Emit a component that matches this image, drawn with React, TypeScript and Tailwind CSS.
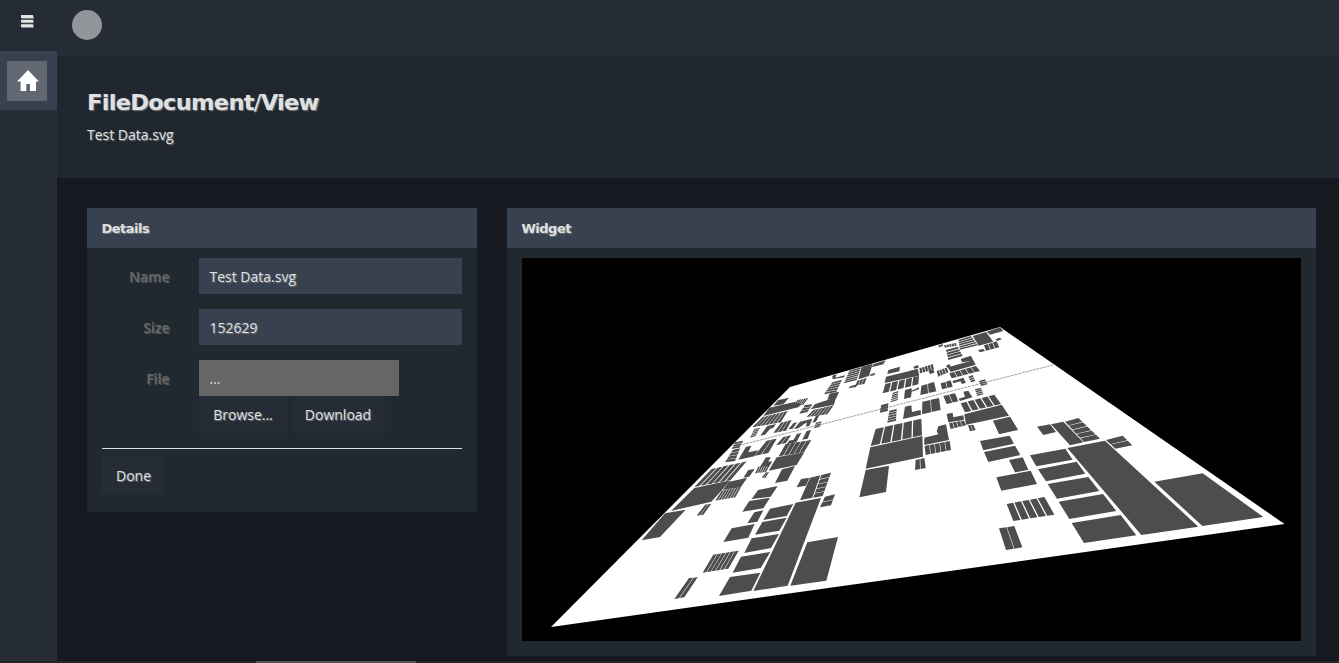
import React from "react";

type Block = { p: number[]; cols?: number; rows?: number };
type Region = { x: number; y: number; blocks: Block[] };

const b = (...p: number[]): Block => ({ p });
const cols = (n: number, ...p: number[]): Block => ({ p, cols: n });
const rows = (n: number, ...p: number[]): Block => ({ p, rows: n });

// Four-sided blocks list their corners from the top left, clockwise. Units are thirds of a pixel.
const regions: Region[] = [
  {
    x: 640, y: 430,
    blocks: [
      cols(6, 215, 117, 320, 94, 272, 150, 163, 171),
      b(163, 174, 272, 151, 214, 215, 93, 243),
      b(268, 155, 322, 143, 302, 172, 248, 180),
      b(325, 120, 344, 117, 328, 140, 310, 143),
      cols(7, 245, 182, 303, 171, 286, 202, 226, 212),
      cols(2, 196, 224, 214, 221, 190, 254, 170, 257),
      b(75, 250, 137, 239, 60, 321, 5, 331),
      cols(5, 437, 42, 514, 30, 492, 67, 416, 79),
      b(410, 82, 493, 67, 470, 105, 386, 122),
      b(378, 82, 392, 82, 385, 95, 397, 94, 388, 109, 360, 111),
      cols(5, 355, 110, 388, 108, 378, 126, 345, 130),
      cols(2, 378, 127, 387, 126, 377, 143, 365, 143),
      b(426, 118, 465, 108, 442, 152, 405, 159),
      b(354, 180, 413, 168, 392, 200, 335, 207),
      b(328, 213, 390, 203, 370, 235, 307, 245),
      b(343, 247, 370, 241, 352, 275, 322, 280),
      b(275, 295, 344, 282, 325, 323, 250, 336),
      b(390, 236, 460, 222, 440, 258, 370, 270),
      b(367, 276, 440, 263, 418, 302, 345, 314),
      b(335, 325, 417, 312, 393, 354, 313, 369),
      b(303, 380, 391, 366, 362, 414, 278, 428),
      b(270, 441, 361, 428, 334, 482, 237, 498),
      b(467, 218, 543, 204, 443, 467, 340, 483),
      b(502, 337, 594, 321, 559, 452, 451, 467),
      cols(6, 220, 374, 296, 362, 265, 416, 188, 428),
      cols(2, 147, 444, 173, 442, 133, 502, 103, 507),
      b(483, 147, 508, 143, 498, 167, 470, 172),
      b(510, 143, 541, 136, 517, 203, 480, 211),
      rows(5, 544, 135, 573, 128, 548, 198, 520, 203),
      rows(2, 555, 200, 585, 193, 573, 226, 540, 232),
    ],
  },
  {
    x: 980, y: 410,
    blocks: [
      b(39, 32, 90, 22, 113, 58, 58, 72),
      b(0, 93, 89, 77, 102, 101, 10, 121),
      b(12, 126, 105, 107, 121, 135, 25, 156),
      b(87, 150, 128, 142, 145, 179, 105, 187),
      b(49, 202, 152, 182, 171, 222, 64, 242),
      cols(5, 80, 282, 193, 261, 223, 314, 100, 333),
      cols(2, 57, 355, 103, 348, 127, 412, 78, 420),
      b(150, 136, 256, 116, 278, 149, 169, 169),
      b(174, 178, 290, 155, 316, 191, 198, 214),
      b(203, 222, 325, 201, 358, 243, 231, 266),
      b(236, 275, 369, 252, 409, 303, 268, 327),
      b(275, 339, 422, 315, 469, 376, 312, 399),
      b(262, 114, 375, 92, 655, 350, 484, 375),
      b(523, 215, 668, 190, 850, 321, 667, 348),
      b(171, 50, 210, 43, 228, 66, 190, 75),
      b(213, 43, 250, 35, 310, 97, 270, 106),
      rows(5, 255, 35, 295, 24, 360, 86, 312, 96),
      rows(2, 378, 90, 428, 77, 457, 106, 406, 116),
    ],
  },
  {
    x: 850, y: 390,
    blocks: [
      cols(5, 77, 117, 214, 86, 216, 136, 62, 168),
      b(61, 172, 217, 138, 219, 200, 47, 236),
      b(47, 240, 117, 227, 108, 306, 28, 322),
      b(223, 143, 265, 133, 260, 124, 265, 109, 288, 103, 297, 150, 223, 165),
      cols(5, 224, 168, 299, 153, 303, 180, 227, 195),
      cols(2, 197, 210, 223, 204, 227, 234, 195, 240),
      b(165, 50, 184, 46, 186, 66, 212, 60, 213, 74, 159, 87),
      cols(2, 217, 35, 267, 24, 272, 60, 216, 73),
      rows(5, 118, 62, 140, 57, 138, 92, 112, 98),
      rows(3, 94, 45, 115, 40, 112, 63, 91, 67),
      cols(2, 280, 18, 315, 10, 325, 34, 290, 42),
      b(326, 26, 345, 20, 340, 5, 355, 2, 367, 22, 330, 33),
      cols(5, 332, 40, 433, 14, 453, 42, 345, 67),
      b(343, 73, 455, 44, 477, 77, 348, 104),
      b(430, 92, 480, 80, 504, 120, 447, 132),
      b(290, 72, 308, 68, 310, 82, 340, 76, 342, 90, 295, 97),
      cols(4, 297, 99, 342, 92, 348, 106, 302, 117),
      cols(2, 354, 106, 370, 104, 377, 120, 360, 124),
    ],
  },
  {
    x: 910, y: 320,
    blocks: [
      b(230, 35, 270, 22, 280, 33, 240, 44),
      b(188, 48, 228, 36, 250, 65, 206, 77),
      rows(5, 145, 60, 183, 48, 204, 76, 150, 89),
      cols(3, 222, 76, 260, 64, 268, 82, 228, 92),
      b(204, 90, 220, 87, 225, 93, 210, 97),
      b(256, 58, 270, 53, 275, 58, 262, 63),
      cols(5, 102, 76, 138, 69, 140, 77, 105, 83),
      b(85, 77, 97, 72, 99, 78, 87, 82),
      rows(4, 108, 90, 143, 80, 158, 108, 115, 120),
      b(152, 117, 183, 107, 190, 122, 156, 127),
      b(113, 142, 190, 121, 197, 134, 122, 156),
      cols(5, 118, 160, 198, 138, 210, 153, 125, 175),
      cols(4, 80, 153, 110, 143, 115, 157, 85, 170),
      b(108, 137, 118, 132, 122, 140, 112, 143),
      cols(5, 28, 145, 68, 132, 72, 148, 30, 160),
      b(55, 152, 70, 148, 73, 158, 60, 162),
      b(10, 140, 24, 135, 26, 143, 12, 146),
      cols(2, 34, 197, 72, 186, 79, 214, 31, 225),
      cols(2, 92, 190, 122, 181, 128, 200, 96, 208),
      b(127, 183, 160, 173, 168, 188, 156, 192, 151, 184, 130, 190),
      rows(3, 175, 170, 188, 165, 196, 183, 183, 187),
      rows(3, 207, 183, 225, 178, 232, 193, 213, 198),
      rows(4, 195, 208, 213, 203, 220, 223, 202, 228),
    ],
  },
  {
    x: 770, y: 320,
    blocks: [
      b(311, 132, 347, 121, 340, 133, 305, 142),
      b(275, 140, 308, 131, 297, 168, 265, 178),
      rows(6, 238, 152, 273, 142, 260, 180, 222, 190),
      cols(3, 262, 182, 290, 174, 283, 192, 256, 197),
      b(242, 198, 262, 193, 258, 201, 234, 205),
      b(302, 163, 316, 158, 313, 166, 300, 168),
      b(187, 167, 200, 163, 196, 173, 225, 166, 222, 172, 188, 178),
      rows(5, 187, 187, 216, 179, 199, 216, 162, 223),
      b(178, 223, 207, 215, 200, 232, 172, 240),
      b(355, 150, 390, 140, 388, 154, 352, 162),
      b(348, 170, 443, 147, 447, 167, 344, 189),
      cols(5, 346, 192, 447, 168, 445, 193, 338, 220),
      b(420, 153, 443, 147, 447, 166, 420, 172),
      rows(5, 368, 219, 385, 213, 383, 240, 362, 247),
      b(405, 210, 425, 205, 425, 212, 447, 202, 447, 208, 425, 215, 423, 232, 402, 237),
      rows(3, 333, 257, 355, 251, 353, 272, 330, 278),
    ],
  },
  {
    x: 690, y: 380,
    blocks: [
      b(265, 60, 297, 53, 280, 73, 250, 77),
      b(238, 83, 313, 66, 335, 72, 325, 82, 300, 88, 220, 108),
      cols(7, 218, 111, 293, 93, 272, 127, 187, 142),
      cols(5, 322, 60, 355, 54, 340, 74, 310, 80),
      rows(3, 345, 75, 368, 73, 352, 96, 328, 101),
      b(422, 40, 445, 37, 438, 56, 415, 58),
      b(376, 72, 438, 52, 432, 74, 362, 88),
      cols(6, 370, 90, 431, 76, 412, 103, 350, 111),
      rows(5, 193, 147, 210, 143, 197, 168, 180, 173),
      b(232, 138, 258, 132, 250, 143, 240, 147, 225, 164, 211, 167),
      cols(3, 273, 128, 305, 120, 288, 152, 250, 159),
      b(310, 130, 322, 126, 308, 146, 295, 148),
      b(330, 125, 367, 116, 358, 138, 348, 140, 350, 127, 325, 145, 312, 147),
      b(378, 107, 388, 105, 378, 125, 367, 128),
      rows(3, 378, 128, 395, 124, 390, 140, 372, 145),
      rows(3, 135, 187, 160, 182, 148, 203, 125, 207),
      rows(4, 128, 210, 150, 205, 135, 243, 105, 247),
      b(168, 200, 184, 197, 175, 217, 205, 211, 193, 229, 145, 239),
      cols(2, 230, 182, 260, 176, 235, 219, 194, 227),
      cols(2, 280, 171, 303, 166, 288, 189, 258, 196),
      b(321, 162, 334, 159, 319, 187, 291, 192, 297, 182, 311, 179),
      b(350, 153, 363, 150, 353, 176, 337, 179),
    ],
  },
];

function pieces(block: Block): string[] {
  const { p } = block;
  const n = block.cols ?? block.rows ?? 1;
  if (n === 1 || p.length !== 8) return [p.join(" ")];
  const across = block.cols !== undefined;
  const [x1, y1, x2, y2, x3, y3, x4, y4] = p;
  const len = across ? Math.hypot(x2 - x1, y2 - y1) : Math.hypot(x4 - x1, y4 - y1);
  const gap = Math.min(0.07, (len > 90 ? 3.8 : 1.7) / len);
  const w = (1 - gap * (n - 1)) / n;
  const at = (u: number, v: number) => {
    const x = (x1 * (1 - u) + x2 * u) * (1 - v) + (x4 * (1 - u) + x3 * u) * v;
    const y = (y1 * (1 - u) + y2 * u) * (1 - v) + (y4 * (1 - u) + y3 * u) * v;
    return `${x.toFixed(1)},${y.toFixed(1)}`;
  };
  return Array.from({ length: n }, (_, i) => {
    const s = i * (w + gap);
    const e = s + w;
    return across
      ? [at(s, 0), at(e, 0), at(e, 1), at(s, 1)].join(" ")
      : [at(0, s), at(1, s), at(1, e), at(0, e)].join(" ");
  });
}

function CityPlane() {
  return (
    <svg className="block h-[383px] w-full bg-black" viewBox="522 258 779 383">
      <polygon points="551,627 790,387 1000,327 1284.5,524" fill="#fff" />
      <path d="M735 446.5 1053 365" stroke="#777" strokeWidth=".7" strokeDasharray="3 .7" />
      {regions.map((r, i) => (
        <g key={i} transform={`translate(${r.x} ${r.y}) scale(.33333)`} fill="#4d4d4d">
          {r.blocks.flatMap((block, j) =>
            pieces(block).map((points, k) => <polygon key={`${j}-${k}`} points={points} />)
          )}
        </g>
      ))}
    </svg>
  );
}

const display = "font-['DejaVu_Sans',sans-serif] font-bold";
const glow = "[text-shadow:1px_1px_1px_#777]";

function Panel({ title, className, children }: { title: string; className: string; children: React.ReactNode }) {
  return (
    <section className={`bg-[#202830] ${className}`}>
      <h2 className={`flex h-10 items-center bg-[#38414f] px-[14.5px] pt-px text-[13px] tracking-[-0.5px] ${display} ${glow}`}>
        {title}
      </h2>
      <div className="px-[15px] pt-[10px]">{children}</div>
    </section>
  );
}

function Row({ label, children }: { label: string; children: React.ReactNode }) {
  return (
    <div className="mb-[15px] flex">
      <label className="w-[68px] pt-[9px] pr-[0.5px] text-right font-semibold text-[#666] [text-shadow:1px_1px_0_#555]">{label}</label>
      <div className="ml-[29px] flex-1">{children}</div>
    </div>
  );
}

function Button({ children, className }: { children: React.ReactNode; className: string }) {
  return <button className={`h-[37px] bg-[#262c35] text-center ${glow} ${className}`}>{children}</button>;
}

export default function App() {
  return (
    <div className="flex h-[663px] w-[1339px] flex-col overflow-hidden bg-[#161920] font-['Open_Sans',sans-serif] text-[14px] leading-5 text-[#e0e0e0]">
      <div className="flex h-[661px]">
        <aside className="w-[57px] bg-[#262d36]">
          <div className="flex h-[51px] justify-center bg-[#262c35] pt-[15px] pr-[2px]">
            <svg className="h-[13px] w-[13px]" viewBox="0 0 13 13">
              <path d="M1 1h12v3H1zM1 5.2h12v3H1zM1 9.8h12v3H1z" fill="#777" />
              <path d="M0 0h12v3H0zM0 4.8h12v2.6H0zM0 9.2h12v3H0z" fill="#e4e4e4" />
            </svg>
          </div>
          <div className="h-[59px] bg-[#38414f] pt-[10px] pl-[7px]">
            <div className="flex h-10 w-10 items-center justify-center bg-[#626871]">
              <svg className="ml-[2px] h-[22px] w-[22px]" viewBox="0 0 22 22">
                <path d="M11 0 22 11.5h-3V21h-6v-7H9.3v7H3.6v-9.5H0z" fill="#fff" />
              </svg>
            </div>
          </div>
        </aside>
        <main className="flex-1">
          <div className="h-14 bg-[#262c35] pt-[10px] pl-[15px]">
            <div className="h-[30px] w-[30px] rounded-full bg-[#929599]" />
          </div>
          <header className="h-[122px] border-b border-[#262c35] bg-[#20272f] pt-[31px] pl-[30px]">
            <h1 className={`h-[30px] w-max origin-left scale-x-[1.025] text-[22px] leading-[31px] tracking-[-0.7px] ${display} ${glow}`}>
              FileDocument<span className="font-normal">/</span>View
            </h1>
            <p className={`mt-2 ${glow}`}>Test Data.svg</p>
          </header>
          <div className="flex items-start gap-[30px] pt-[30px] pl-[30px]">
            <Panel title="Details" className="h-[304px] w-[390px]">
              <Row label="Name">
                <div className={`h-9 bg-[#38414f] px-[10.5px] py-[9px] ${glow}`}>Test Data.svg</div>
              </Row>
              <Row label="Size">
                <div className={`h-9 bg-[#38414f] px-[10.5px] py-[9px] ${glow}`}>152629</div>
              </Row>
              <Row label="File">
                <div className="h-9 w-[200px] bg-[#666] px-[10.5px] py-[9px]">...</div>
                <div className="flex gap-1">
                  <Button className="w-[88px]">Browse...</Button>
                  <Button className="w-[94px]">Download</Button>
                </div>
              </Row>
              <div className="mb-2 border-t border-[#e0e0e0]" />
              <Button className="w-[63px]">Done</Button>
            </Panel>
            <Panel title="Widget" className="h-[448px] w-[809px]">
              <CityPlane />
            </Panel>
          </div>
        </main>
      </div>
      <div className="h-[2px] bg-[#252426] pl-[256px]">
        <div className="h-[2px] w-[160px] bg-[#555356]" />
      </div>
    </div>
  );
}
